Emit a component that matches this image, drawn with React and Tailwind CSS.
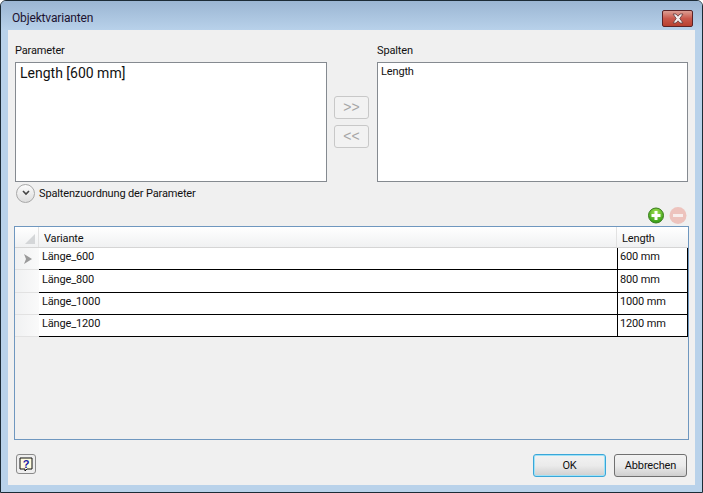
import React from 'react';

const rows = [
  { name: 'Länge_600', value: '600 mm', current: true, height: 'h-[22px]', leading: 'leading-[17px]' },
  { name: 'Länge_800', value: '800 mm', height: 'h-[23px]', leading: 'leading-[19px]' },
  { name: 'Länge_1000', value: '1000 mm', height: 'h-[22px]', leading: 'leading-[17px]' },
  { name: 'Länge_1200', value: '1200 mm', height: 'h-[22px]', leading: 'leading-[17px]' },
];

const CloseIcon = () => (
  <svg width="14" height="11" viewBox="0 0 14 11">
    <path d="M2 1h3l2 2.2L9 1h3L8.8 5.5 12 10H9L7 7.8 5 10H2l3.2-4.5z" fill="#f4eeee" stroke="#5f3a3c" strokeWidth="0.8" />
  </svg>
);

const AddIcon = () => (
  <svg width="16" height="17" viewBox="0 0 16 17">
    <defs>
      <radialGradient id="greenFill" cx="50%" cy="30%" r="70%">
        <stop offset="0%" stopColor="#a8e455" />
        <stop offset="100%" stopColor="#2f9a12" />
      </radialGradient>
    </defs>
    <circle cx="8" cy="8.5" r="7.5" fill="url(#greenFill)" stroke="#3a7d1f" />
    <path d="M6.5 4h3v3h3v3h-3v3h-3v-3h-3V7h3z" fill="#fff" />
  </svg>
);

const RemoveIcon = () => (
  <svg width="18" height="17" viewBox="0 0 18 17">
    <circle cx="9" cy="8.5" r="8.5" fill="#edc3bd" />
    <rect x="4" y="7" width="10" height="3" fill="#f8eeec" />
  </svg>
);

const HelpIcon = () => (
  <svg width="14" height="15" viewBox="0 0 14 15">
    <path d="M1 1h12v11H8l-2 2v-2H1z" fill="#fffde0" stroke="#111" strokeWidth="1" />
    <text x="7" y="10.5" textAnchor="middle" fontSize="11" fontWeight="700" fill="#1a1aa8" fontFamily="Liberation Sans, sans-serif">?</text>
  </svg>
);

const App = () => {
  return (
    <div className="w-[703px] h-[493px] flex flex-col overflow-hidden rounded-t-[6px] border border-[#1c2b36] bg-[#b9d2ea] font-['Roboto',sans-serif] text-[11px] tracking-[-0.15px] text-[#111]">
      {/* title bar */}
      <div className="h-[29px] shrink-0 flex items-center justify-between pl-[11px] pr-[9px] bg-gradient-to-b from-[#9bb6d3] to-[#b8d1ea]">
        <span className="text-[12px] text-[#1c1230] mt-[4px]">Objektvarianten</span>
        <button className="w-[31px] h-[17px] mt-[6px] flex items-center justify-center rounded-[2px] border border-[#5a2226] bg-gradient-to-b from-[#dc9e94] via-[#c9584c] to-[#b8402f]">
          <CloseIcon />
        </button>
      </div>

      <div className="w-[687px] h-[455px] ml-[7px] flex flex-col bg-[#f0f0f0] px-[6px]">
        {/* list boxes */}
        <div className="flex pt-[14px]">
          <div className="w-[312px] ml-[1px]">
            <div className="h-[18px] leading-[14px]">Parameter</div>
            <div className="h-[120px] border border-[#858a90] bg-white px-[4px] text-[14px] tracking-normal leading-[20px]">Length [600 mm]</div>
          </div>
          <div className="w-[35px] ml-[7px] mt-[52px] flex flex-col gap-[6px]">
            <button className="h-[23px] rounded-[3px] border border-[#c8c8c8] bg-[#f2f2f2] text-[#a6a6a6] font-['Liberation_Sans',sans-serif] text-[14px] tracking-normal">&gt;&gt;</button>
            <button className="h-[23px] rounded-[3px] border border-[#c8c8c8] bg-[#f2f2f2] text-[#a6a6a6] font-['Liberation_Sans',sans-serif] text-[14px] tracking-normal">&lt;&lt;</button>
          </div>
          <div className="w-[311px] ml-[8px]">
            <div className="h-[18px] leading-[14px]">Spalten</div>
            <div className="h-[120px] border border-[#858a90] bg-white px-[3px] pt-[1px] leading-[16px]">Length</div>
          </div>
        </div>

        {/* expander */}
        <div className="flex items-center gap-[4px] ml-[2px] mt-[1px] h-[20px]">
          <div className="w-[19px] h-[19px] flex items-center justify-center rounded-full border border-[#a8a8a8] bg-gradient-to-b from-[#fbfbfb] to-[#dedede]">
            <svg width="8" height="6" viewBox="0 0 8 6">
              <path d="M1 1l3 3 3-3" fill="none" stroke="#444" strokeWidth="1.6" />
            </svg>
          </div>
          <span className="pt-[2px]">Spaltenzuordnung der Parameter</span>
        </div>

        {/* add / remove */}
        <div className="flex justify-end gap-[5px] h-[18px] mt-[4px] pr-[2px]">
          <AddIcon />
          <RemoveIcon />
        </div>

        {/* grid */}
        <div className="w-[675px] h-[214px] mt-[1px] border border-[#6f97bf] flex flex-col bg-[#f0f0f0]">
          <div className="h-[21px] flex shrink-0 border-b border-[#d5d5d5] bg-gradient-to-b from-[#ffffff] to-[#f0f1f2]">
            <div className="w-[24px] flex items-end justify-end pr-[3px] pb-[3px] border-r border-[#e2e2e2]">
              <div className="w-0 h-0 border-l-[10px] border-b-[10px] border-l-transparent border-b-[#d4d6d8]" />
            </div>
            <div className="flex-1 pl-[5px] leading-[23px] border-r border-[#e2e2e2]">Variante</div>
            <div className="w-[71px] pl-[5px] leading-[23px]">Length</div>
          </div>
          {rows.map((row) => (
            <div key={row.name} className={`${row.height} flex shrink-0`}>
              <div className="w-[24px] pl-[1px] flex items-center justify-center border-b border-[#e2e2e2] bg-gradient-to-r from-[#f0f1f2] to-[#fafafa]">
                {row.current && (
                  <svg width="10" height="12" viewBox="0 0 10 12">
                    <path d="M1 1l8 5-8 5 2-5z" fill="#9a9a9a" />
                  </svg>
                )}
              </div>
              <div className={`flex-1 bg-white border-b border-black pl-[3px] ${row.leading}`}>{row.name}</div>
              <div className={`w-[71px] bg-white border-b border-r border-l border-black pl-[2px] ${row.leading}`}>{row.value}</div>
            </div>
          ))}
        </div>

        {/* footer */}
        <div className="flex items-start mt-[14px] ml-[2px]">
          <button className="w-[20px] h-[20px] flex items-center justify-center rounded-[3px] border border-[#8a8a8a] bg-[#eeeeee]">
            <HelpIcon />
          </button>
          <div className="flex-1" />
          <button className="w-[73px] h-[23px] pt-[2px] rounded-[3px] border border-[#3aa6d8] shadow-[inset_0_0_0_1px_#9fe2f7] bg-gradient-to-b from-[#f2f2f2] via-[#ebebeb] to-[#cfcfcf]">OK</button>
          <button className="w-[73px] h-[23px] pt-[2px] ml-[8px] mr-[2px] rounded-[3px] border border-[#707070] bg-gradient-to-b from-[#f2f2f2] via-[#ebebeb] to-[#cfcfcf]">Abbrechen</button>
        </div>
      </div>
    </div>
  );
};

export default App;
